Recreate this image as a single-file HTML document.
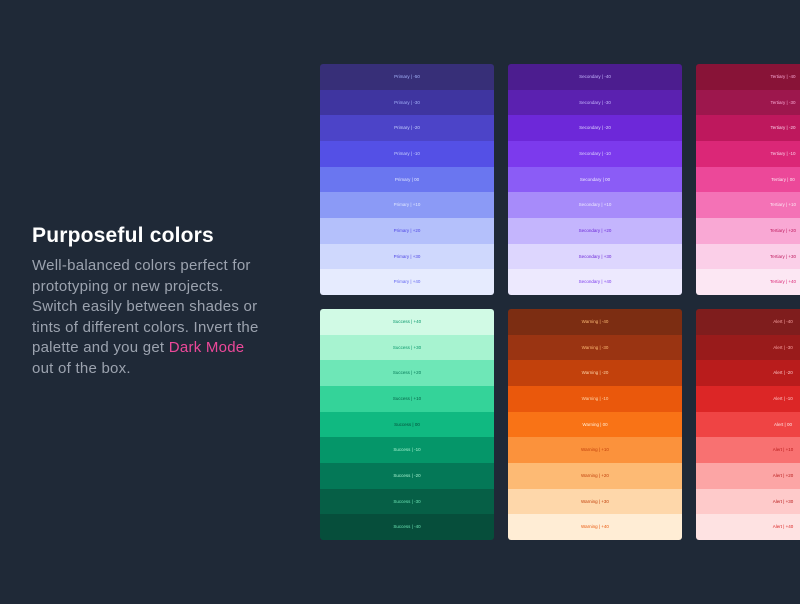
<!DOCTYPE html>
<html><head><meta charset="utf-8"><style>
html,body{margin:0;padding:0}
body{width:800px;height:604px;background:#1f2937;position:relative;overflow:hidden;font-family:"Liberation Sans",sans-serif}
h1{position:absolute;left:32px;top:224px;margin:0;font-size:21px;font-weight:bold;color:#fff;letter-spacing:0.2px}
p{position:absolute;left:32px;top:256px;margin:0;width:232px;font-size:15px;letter-spacing:0.25px;line-height:20.6px;color:#9ca3af}
p span{color:#ec4899}
.col{position:absolute;width:174px;border-radius:3px;overflow:hidden}
.col div{height:25.67px;line-height:25.67px;text-align:center;font-size:4.5px}
</style></head><body>
<h1>Purposeful colors</h1>
<p>Well-balanced colors perfect for prototyping or new projects. Switch easily between shades or tints of different colors. Invert the palette and you get <span>Dark Mode</span> out of the box.</p>

<div class="col" style="left:320px;top:64px">
<div style="background:#372f78;color:#a5b4fc">Primary | -50</div>
<div style="background:#3f35a0;color:#a5b4fc">Primary | -30</div>
<div style="background:#4c44c8;color:#c7d2fe">Primary | -20</div>
<div style="background:#5450e6;color:#c7d2fe">Primary | -10</div>
<div style="background:#6a76f0;color:#e0e7ff">Primary | 00</div>
<div style="background:#8b9af6;color:#e0e7ff">Primary | +10</div>
<div style="background:#b4c0fb;color:#4f46e5">Primary | +20</div>
<div style="background:#cfd8fd;color:#4f46e5">Primary | +30</div>
<div style="background:#e6ebfe;color:#6366f1">Primary | +40</div>
</div>

<div class="col" style="left:508px;top:64px">
<div style="background:#4c1d8f;color:#c4b5fd">Secondary | -40</div>
<div style="background:#5b21b0;color:#c4b5fd">Secondary | -30</div>
<div style="background:#6d28d9;color:#ddd6fe">Secondary | -20</div>
<div style="background:#7c3aed;color:#ddd6fe">Secondary | -10</div>
<div style="background:#8b5cf6;color:#ede9fe">Secondary | 00</div>
<div style="background:#a78bfa;color:#ede9fe">Secondary | +10</div>
<div style="background:#c4b5fd;color:#6d28d9">Secondary | +20</div>
<div style="background:#ddd6fe;color:#6d28d9">Secondary | +30</div>
<div style="background:#ede9fe;color:#7c3aed">Secondary | +40</div>
</div>

<div class="col" style="left:696px;top:64px">
<div style="background:#881337;color:#f9a8d4">Tertiary | -40</div>
<div style="background:#9d174d;color:#f9a8d4">Tertiary | -30</div>
<div style="background:#be185d;color:#fbcfe8">Tertiary | -20</div>
<div style="background:#db2777;color:#fbcfe8">Tertiary | -10</div>
<div style="background:#ec4899;color:#fce7f3">Tertiary | 00</div>
<div style="background:#f472b6;color:#fce7f3">Tertiary | +10</div>
<div style="background:#f9a8d4;color:#be185d">Tertiary | +20</div>
<div style="background:#fbcfe8;color:#be185d">Tertiary | +30</div>
<div style="background:#fce7f3;color:#db2777">Tertiary | +40</div>
</div>

<div class="col" style="left:320px;top:309px">
<div style="background:#d1fae5;color:#059669">Success | +40</div>
<div style="background:#a7f3d0;color:#059669">Success | +30</div>
<div style="background:#6ee7b7;color:#047857">Success | +20</div>
<div style="background:#34d399;color:#065f46">Success | +10</div>
<div style="background:#10b981;color:#064e3b">Success | 00</div>
<div style="background:#059669;color:#a7f3d0">Success | -10</div>
<div style="background:#047857;color:#a7f3d0">Success | -20</div>
<div style="background:#065f46;color:#6ee7b7">Success | -30</div>
<div style="background:#064e3b;color:#6ee7b7">Success | -40</div>
</div>

<div class="col" style="left:508px;top:309px">
<div style="background:#7c2d12;color:#fdba74">Warning | -40</div>
<div style="background:#9a3412;color:#fdba74">Warning | -30</div>
<div style="background:#c2410c;color:#fed7aa">Warning | -20</div>
<div style="background:#ea580c;color:#fed7aa">Warning | -10</div>
<div style="background:#f97316;color:#ffedd5">Warning | 00</div>
<div style="background:#fb923c;color:#c2410c">Warning | +10</div>
<div style="background:#fdba74;color:#c2410c">Warning | +20</div>
<div style="background:#fed7aa;color:#c2410c">Warning | +30</div>
<div style="background:#ffedd5;color:#ea580c">Warning | +40</div>
</div>

<div class="col" style="left:696px;top:309px">
<div style="background:#7f1d1d;color:#fca5a5">Alert | -40</div>
<div style="background:#991b1b;color:#fca5a5">Alert | -30</div>
<div style="background:#b91c1c;color:#fecaca">Alert | -20</div>
<div style="background:#dc2626;color:#fecaca">Alert | -10</div>
<div style="background:#ef4444;color:#fee2e2">Alert | 00</div>
<div style="background:#f87171;color:#b91c1c">Alert | +10</div>
<div style="background:#fca5a5;color:#b91c1c">Alert | +20</div>
<div style="background:#fecaca;color:#b91c1c">Alert | +30</div>
<div style="background:#fee2e2;color:#dc2626">Alert | +40</div>
</div>
</body></html>
